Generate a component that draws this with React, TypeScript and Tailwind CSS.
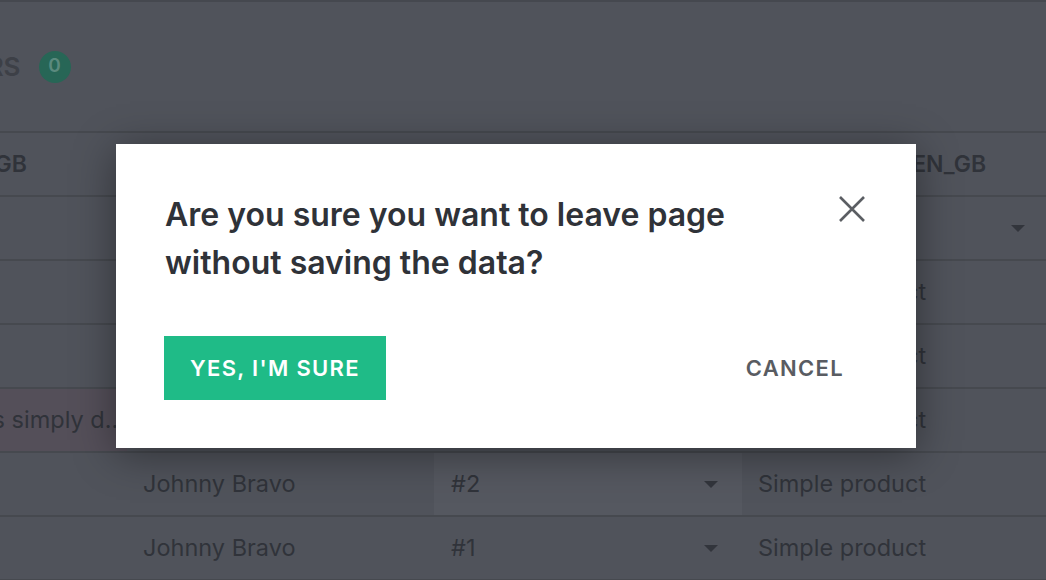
import React from 'react';

const rows = [
  { desc: '', author: '', type: '', product: '', arrow: true },
  { desc: '', author: '', type: '', product: 'Simple product', arrow: false },
  { desc: '', author: '', type: '', product: 'Simple product', arrow: false },
  { desc: 'Lorem Ipsum is simply d...', author: '', type: '', product: 'Simple product', arrow: false, error: true },
  { desc: '', author: 'Johnny Bravo', type: '#2', product: 'Simple product', arrow: false, hover: true },
  { desc: '', author: 'Johnny Bravo', type: '#1', product: 'Simple product', arrow: false },
];

function Caret() {
  return (
    <svg width="14" height="7" viewBox="0 0 14 7" className="shrink-0">
      <path d="M0 0 L14 0 L7 7 Z" fill="#32353c" />
    </svg>
  );
}

function CloseIcon() {
  return (
    <svg width="26" height="26" viewBox="0 0 26 26">
      <path d="M1 1 L25 25 M25 1 L1 25" stroke="#5b5e63" strokeWidth="2.6" />
    </svg>
  );
}

export default function App() {
  return (
    <div className="relative h-[580px] w-[1046px] overflow-hidden bg-[#50535b] font-['Inter',sans-serif]">
      <div className="h-[2px] bg-[#45484f]" />
      {/* header strip */}
      <div className="flex h-[131px] items-center border-b-2 border-[#46494f]">
        <div className="ml-[-83px] flex items-center gap-[18px]">
          <span className="text-[26px] font-semibold uppercase text-[#3d4047]">Errors</span>
          <span className="flex h-8 w-8 items-center justify-center rounded-full bg-[#276656] text-[19px] font-semibold text-[#5b8a7e]">
            0
          </span>
        </div>
      </div>

      {/* table */}
      <div className="text-[23.5px] text-[#30333a]">
        <div className="flex h-16 items-center border-b-2 border-[#46494f] text-[23px] font-semibold">
          <div className="ml-[-200px] w-[327px] shrink-0 overflow-hidden whitespace-nowrap pr-[100px] text-right">
            NAME_EN_GB
          </div>
          <div className="w-[307px] shrink-0" />
          <div className="w-[308px] shrink-0" />
          <div className="flex-1 whitespace-nowrap pl-[3px]">DESCRIPTION_EN_GB</div>
        </div>
        {rows.map((r, i) => (
          <div key={i} className="flex h-16 items-stretch border-b-2 border-[#46494f]">
            <div
              className={`ml-[-200px] flex w-[327px] shrink-0 items-center justify-end overflow-hidden whitespace-nowrap pr-[2px] ${
                r.error ? 'bg-[#544f59]' : ''
              }`}
            >
              <span>{r.desc}</span>
            </div>
            <div className="flex w-[307px] shrink-0 items-center pl-4">{r.author}</div>
            <div
              className={`flex w-[308px] shrink-0 items-center justify-between pl-[17px] pr-6 ${
                r.hover ? 'bg-[#555860]' : ''
              }`}
            >
              <span>{r.type}</span>
              {r.type && <Caret />}
            </div>
            <div className="flex flex-1 items-center justify-between pl-4 pr-[21px]">
              <span>{r.product}</span>
              {r.arrow && <Caret />}
            </div>
          </div>
        ))}
      </div>

      {/* confirm dialog */}
      <div className="absolute left-[116px] top-[144px] w-[800px] bg-white pb-12 pl-12 pr-10 pt-[47px] shadow-[0_6px_40px_rgba(0,0,0,0.4)]">
        <div className="flex items-start justify-between">
          <h2 className="w-[620px] pl-[1px] text-[32px] font-semibold leading-[48px] text-[#2f3238]">
            Are you sure you want to leave page without saving the data?
          </h2>
          <button className="mr-[11px] mt-[5px] flex h-[26px] w-[26px] items-center justify-center">
            <CloseIcon />
          </button>
        </div>
        <div className="mt-[49px] flex items-center justify-between">
          <button className="h-16 w-[222px] bg-[#1fbb87] text-[22px] font-semibold tracking-[0.06em] text-white">
            YES, I'M SURE
          </button>
          <button className="pr-[32px] text-[22px] font-semibold tracking-[0.06em] text-[#595c62]">
            CANCEL
          </button>
        </div>
      </div>
    </div>
  );
}
